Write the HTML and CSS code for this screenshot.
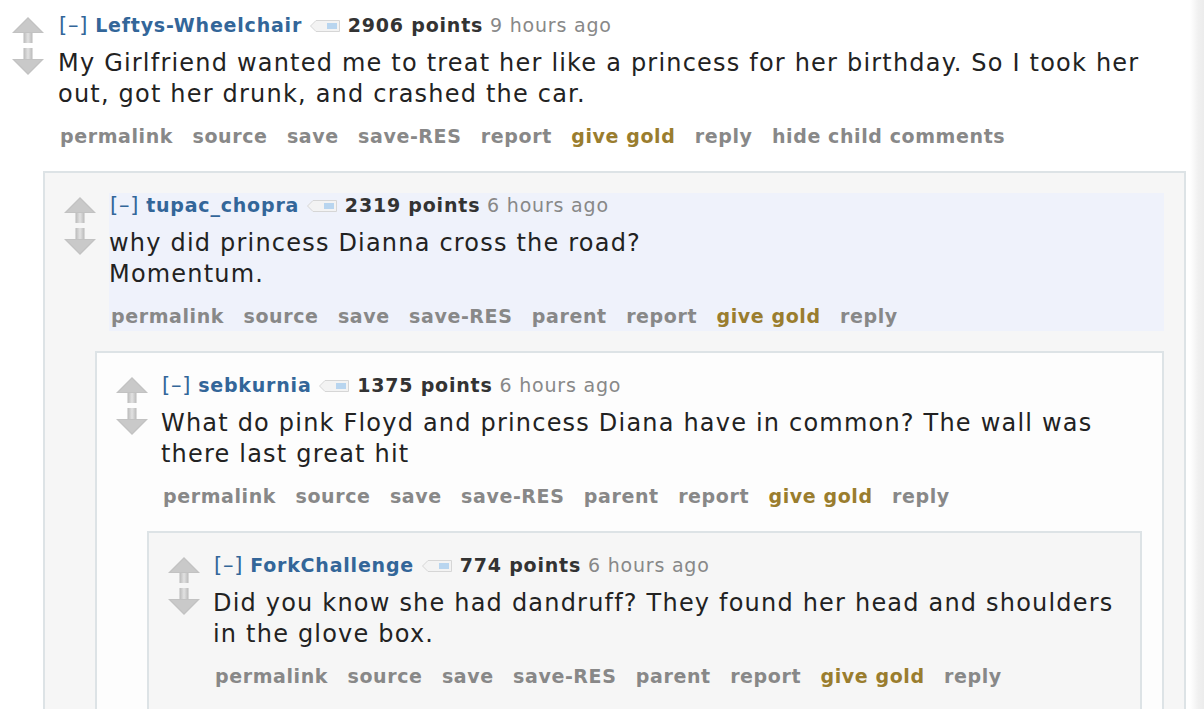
FILE: index.html
```html
<!DOCTYPE html>
<html>
<head>
<meta charset="utf-8">
<link rel="stylesheet" href="styles.css">
</head>
<body>
<svg width="0" height="0" class="defs">
  <defs>
    <linearGradient id="shaft" x1="0" x2="1" y1="0" y2="0">
      <stop offset="0" stop-color="#b9b9b9"/>
      <stop offset="0.5" stop-color="#e2e2e2"/>
      <stop offset="1" stop-color="#b9b9b9"/>
    </linearGradient>
    <symbol id="up" viewBox="0 0 32 26">
      <rect x="11.5" y="15" width="9" height="11" fill="url(#shaft)"/>
      <path d="M16 0 L32 16 L0 16 Z" fill="#c2c2c2"/>
      <path d="M16 2 L29 15 L3 15 Z" fill="#c9c9c9"/>
    </symbol>
    <symbol id="down" viewBox="0 0 32 27">
      <rect x="11.5" y="0" width="9" height="12" fill="url(#shaft)"/>
      <path d="M16 27 L32 11 L0 11 Z" fill="#c2c2c2"/>
      <path d="M16 25 L29 12 L3 12 Z" fill="#c9c9c9"/>
    </symbol>
    <symbol id="tag" viewBox="0 0 30 12">
      <path d="M0.5 6 L6 0.5 H29.5 V11.5 H6 Z" fill="#f3f3f3" stroke="#d6d6d6"/>
      <rect x="17" y="3" width="10" height="6" fill="#b8d5ef"/>
    </symbol>
  </defs>
</svg>
<div class="layout">
<div class="page">

<div class="comment">
  <div class="votes">
    <svg class="arrow up"><use href="#up"/></svg>
    <svg class="arrow down"><use href="#down"/></svg>
  </div>
  <div class="entry">
    <div class="tagline"><span class="expand">[–]</span> <span class="author">Leftys-Wheelchair</span> <svg class="tag"><use href="#tag"/></svg> <span class="score">2906 points</span> <span class="time">9 hours ago</span></div>
    <div class="md"><p>My Girlfriend wanted me to treat her like a princess for her birthday. So I took her out, got her drunk, and crashed the car.</p></div>
    <ul class="buttons"><li>permalink</li><li>source</li><li>save</li><li>save-RES</li><li>report</li><li class="gold">give gold</li><li>reply</li><li>hide child comments</li></ul>
  </div>
  <div class="child">
    <div class="comment box odd">
      <div class="votes">
        <svg class="arrow up"><use href="#up"/></svg>
        <svg class="arrow down"><use href="#down"/></svg>
      </div>
      <div class="entry new">
        <div class="tagline"><span class="expand">[–]</span> <span class="author">tupac_chopra</span> <svg class="tag"><use href="#tag"/></svg> <span class="score">2319 points</span> <span class="time">6 hours ago</span></div>
        <div class="md"><p>why did princess Dianna cross the road?<br>Momentum.</p></div>
        <ul class="buttons"><li>permalink</li><li>source</li><li>save</li><li>save-RES</li><li>parent</li><li>report</li><li class="gold">give gold</li><li>reply</li></ul>
      </div>
      <div class="child">
        <div class="comment box even">
          <div class="votes">
            <svg class="arrow up"><use href="#up"/></svg>
            <svg class="arrow down"><use href="#down"/></svg>
          </div>
          <div class="entry">
            <div class="tagline"><span class="expand">[–]</span> <span class="author">sebkurnia</span> <svg class="tag"><use href="#tag"/></svg> <span class="score">1375 points</span> <span class="time">6 hours ago</span></div>
            <div class="md"><p>What do pink Floyd and princess Diana have in common? The wall was there last great hit</p></div>
            <ul class="buttons"><li>permalink</li><li>source</li><li>save</li><li>save-RES</li><li>parent</li><li>report</li><li class="gold">give gold</li><li>reply</li></ul>
          </div>
          <div class="child">
            <div class="comment box odd">
              <div class="votes">
                <svg class="arrow up"><use href="#up"/></svg>
                <svg class="arrow down"><use href="#down"/></svg>
              </div>
              <div class="entry">
                <div class="tagline"><span class="expand">[–]</span> <span class="author">ForkChallenge</span> <svg class="tag"><use href="#tag"/></svg> <span class="score">774 points</span> <span class="time">6 hours ago</span></div>
                <div class="md"><p>Did you know she had dandruff? They found her head and shoulders in the glove box.</p></div>
                <ul class="buttons"><li>permalink</li><li>source</li><li>save</li><li>save-RES</li><li>parent</li><li>report</li><li class="gold">give gold</li><li>reply</li></ul>
              </div>
            </div>
          </div>
        </div>
      </div>
    </div>
  </div>
</div>

</div>
<div class="scrollbar"></div>
</div>
</body>
</html>
```

FILE: styles.css
```css
html, body {
  margin: 0;
  padding: 0;
  background: #fff;
  height: 100%;
  overflow: hidden;
}
body {
  font-family: "DejaVu Sans", Verdana, sans-serif;
  color: #222;
}
.defs {
  position: absolute;
  width: 0;
  height: 0;
}
.layout {
  display: flex;
  height: 100%;
}
.page {
  flex: 1;
  padding: 13px 4px 0 12px;
  min-width: 0;
}
.scrollbar {
  width: 14px;
  background: linear-gradient(to right, #ffffff, #f0f0f0 60%, #ececec);
}
.comment {
  display: grid;
  grid-template-columns: 32px 1fr;
  column-gap: 14px;
}
.votes {
  display: flex;
  flex-direction: column;
  padding-top: 4px;
}
.arrow {
  width: 32px;
}
.arrow.up {
  height: 26px;
}
.arrow.down {
  height: 27px;
  margin-top: 5px;
}
.entry {
  padding-bottom: 3px;
}
.entry.new {
  background: #eff2fb;
}
.tagline {
  font-size: 19px;
  letter-spacing: 0.8px;
  line-height: 24px;
  height: 24px;
  white-space: nowrap;
  color: #888;
}
.expand {
  color: #369;
  margin-left: 1px;
  font-size: 21px;
}
.author {
  color: #369;
  font-weight: bold;
}
.tag {
  width: 30px;
  height: 12px;
  vertical-align: 0px;
  margin: 0 1px;
}
.score {
  color: #333;
  font-weight: bold;
}
.time {
  color: #888;
}
.md {
  font-size: 24px;
  letter-spacing: 1.2px;
  line-height: 31px;
  margin-top: 11px;
}
.md p {
  margin: 0;
}
.buttons {
  list-style: none;
  margin: 14px 0 0 0;
  padding: 0 0 0 2px;
  display: flex;
  gap: 19.4px;
  font-size: 19px;
  letter-spacing: 0.6px;
  line-height: 24px;
  font-weight: bold;
  color: #888;
  white-space: nowrap;
}
.buttons .gold {
  color: #9a7d2e;
}
.child {
  grid-column: 1 / 3;
  margin-left: 31px;
  margin-top: 20px;
}
.box {
  border: 2px solid #dde3e6;
  padding: 20px 20px 20px 19px;
  column-gap: 13px;
}
.box.odd {
  background: #f6f6f6;
}
.box.even {
  background: #fdfdfd;
}
```
